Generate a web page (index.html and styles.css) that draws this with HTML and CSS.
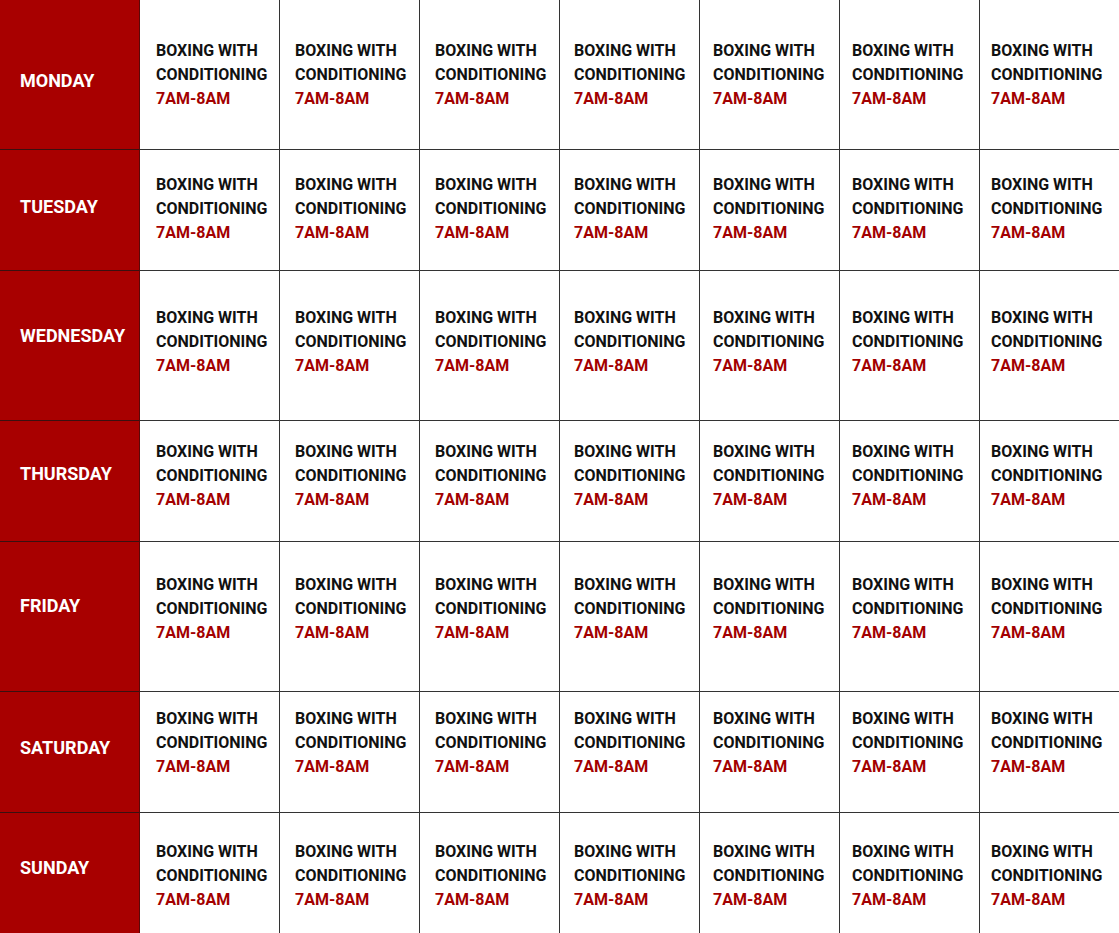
FILE: index.html
```html
<!DOCTYPE html>
<html lang="en">
<head>
<meta charset="utf-8">
<title>Class Schedule</title>
<link rel="stylesheet" href="styles.css">
</head>
<body>
<div class="schedule">
  <div class="row">
    <div class="day">MONDAY</div>
    <div class="cell"><div class="name">BOXING WITH CONDITIONING</div><div class="time">7AM-8AM</div></div>
    <div class="cell"><div class="name">BOXING WITH CONDITIONING</div><div class="time">7AM-8AM</div></div>
    <div class="cell"><div class="name">BOXING WITH CONDITIONING</div><div class="time">7AM-8AM</div></div>
    <div class="cell"><div class="name">BOXING WITH CONDITIONING</div><div class="time">7AM-8AM</div></div>
    <div class="cell"><div class="name">BOXING WITH CONDITIONING</div><div class="time">7AM-8AM</div></div>
    <div class="cell"><div class="name">BOXING WITH CONDITIONING</div><div class="time">7AM-8AM</div></div>
    <div class="cell"><div class="name">BOXING WITH CONDITIONING</div><div class="time">7AM-8AM</div></div>
  </div>
  <div class="row">
    <div class="day">TUESDAY</div>
    <div class="cell"><div class="name">BOXING WITH CONDITIONING</div><div class="time">7AM-8AM</div></div>
    <div class="cell"><div class="name">BOXING WITH CONDITIONING</div><div class="time">7AM-8AM</div></div>
    <div class="cell"><div class="name">BOXING WITH CONDITIONING</div><div class="time">7AM-8AM</div></div>
    <div class="cell"><div class="name">BOXING WITH CONDITIONING</div><div class="time">7AM-8AM</div></div>
    <div class="cell"><div class="name">BOXING WITH CONDITIONING</div><div class="time">7AM-8AM</div></div>
    <div class="cell"><div class="name">BOXING WITH CONDITIONING</div><div class="time">7AM-8AM</div></div>
    <div class="cell"><div class="name">BOXING WITH CONDITIONING</div><div class="time">7AM-8AM</div></div>
  </div>
  <div class="row">
    <div class="day">WEDNESDAY</div>
    <div class="cell"><div class="name">BOXING WITH CONDITIONING</div><div class="time">7AM-8AM</div></div>
    <div class="cell"><div class="name">BOXING WITH CONDITIONING</div><div class="time">7AM-8AM</div></div>
    <div class="cell"><div class="name">BOXING WITH CONDITIONING</div><div class="time">7AM-8AM</div></div>
    <div class="cell"><div class="name">BOXING WITH CONDITIONING</div><div class="time">7AM-8AM</div></div>
    <div class="cell"><div class="name">BOXING WITH CONDITIONING</div><div class="time">7AM-8AM</div></div>
    <div class="cell"><div class="name">BOXING WITH CONDITIONING</div><div class="time">7AM-8AM</div></div>
    <div class="cell"><div class="name">BOXING WITH CONDITIONING</div><div class="time">7AM-8AM</div></div>
  </div>
  <div class="row">
    <div class="day">THURSDAY</div>
    <div class="cell"><div class="name">BOXING WITH CONDITIONING</div><div class="time">7AM-8AM</div></div>
    <div class="cell"><div class="name">BOXING WITH CONDITIONING</div><div class="time">7AM-8AM</div></div>
    <div class="cell"><div class="name">BOXING WITH CONDITIONING</div><div class="time">7AM-8AM</div></div>
    <div class="cell"><div class="name">BOXING WITH CONDITIONING</div><div class="time">7AM-8AM</div></div>
    <div class="cell"><div class="name">BOXING WITH CONDITIONING</div><div class="time">7AM-8AM</div></div>
    <div class="cell"><div class="name">BOXING WITH CONDITIONING</div><div class="time">7AM-8AM</div></div>
    <div class="cell"><div class="name">BOXING WITH CONDITIONING</div><div class="time">7AM-8AM</div></div>
  </div>
  <div class="row">
    <div class="day">FRIDAY</div>
    <div class="cell"><div class="name">BOXING WITH CONDITIONING</div><div class="time">7AM-8AM</div></div>
    <div class="cell"><div class="name">BOXING WITH CONDITIONING</div><div class="time">7AM-8AM</div></div>
    <div class="cell"><div class="name">BOXING WITH CONDITIONING</div><div class="time">7AM-8AM</div></div>
    <div class="cell"><div class="name">BOXING WITH CONDITIONING</div><div class="time">7AM-8AM</div></div>
    <div class="cell"><div class="name">BOXING WITH CONDITIONING</div><div class="time">7AM-8AM</div></div>
    <div class="cell"><div class="name">BOXING WITH CONDITIONING</div><div class="time">7AM-8AM</div></div>
    <div class="cell"><div class="name">BOXING WITH CONDITIONING</div><div class="time">7AM-8AM</div></div>
  </div>
  <div class="row">
    <div class="day">SATURDAY</div>
    <div class="cell"><div class="name">BOXING WITH CONDITIONING</div><div class="time">7AM-8AM</div></div>
    <div class="cell"><div class="name">BOXING WITH CONDITIONING</div><div class="time">7AM-8AM</div></div>
    <div class="cell"><div class="name">BOXING WITH CONDITIONING</div><div class="time">7AM-8AM</div></div>
    <div class="cell"><div class="name">BOXING WITH CONDITIONING</div><div class="time">7AM-8AM</div></div>
    <div class="cell"><div class="name">BOXING WITH CONDITIONING</div><div class="time">7AM-8AM</div></div>
    <div class="cell"><div class="name">BOXING WITH CONDITIONING</div><div class="time">7AM-8AM</div></div>
    <div class="cell"><div class="name">BOXING WITH CONDITIONING</div><div class="time">7AM-8AM</div></div>
  </div>
  <div class="row">
    <div class="day">SUNDAY</div>
    <div class="cell"><div class="name">BOXING WITH CONDITIONING</div><div class="time">7AM-8AM</div></div>
    <div class="cell"><div class="name">BOXING WITH CONDITIONING</div><div class="time">7AM-8AM</div></div>
    <div class="cell"><div class="name">BOXING WITH CONDITIONING</div><div class="time">7AM-8AM</div></div>
    <div class="cell"><div class="name">BOXING WITH CONDITIONING</div><div class="time">7AM-8AM</div></div>
    <div class="cell"><div class="name">BOXING WITH CONDITIONING</div><div class="time">7AM-8AM</div></div>
    <div class="cell"><div class="name">BOXING WITH CONDITIONING</div><div class="time">7AM-8AM</div></div>
    <div class="cell"><div class="name">BOXING WITH CONDITIONING</div><div class="time">7AM-8AM</div></div>
  </div>
</div>
</body>
</html>
```
FILE: styles.css
```css
html, body {
  margin: 0;
  padding: 0;
  background: #ffffff;
  overflow: hidden;
}

.schedule {
  width: 1120px;
  font-family: Roboto, "Liberation Sans", Arial, sans-serif;
  font-weight: 700;
}

.row {
  display: grid;
  grid-template-columns: repeat(8, 140px);
  height: 150px;
}

.row:nth-child(2),
.row:nth-child(4),
.row:nth-child(6) {
  height: 121px;
}

.day,
.cell {
  box-sizing: border-box;
  border-right: 1px solid #333333;
  border-bottom: 1px solid #333333;
}

.day {
  background: #a80000;
  color: #ffffff;
  font-size: 18px;
  line-height: 24px;
  padding-left: 20px;
  border-bottom-color: #3a1010;
  border-right-color: #5a0808;
}

.cell {
  color: #111111;
  font-size: 16px;
  line-height: 24px;
}

.name {
  max-width: 118px;
}

.time {
  color: #a30000;
}

/* horizontal text offsets per column */
.cell:nth-child(2) { padding-left: 16px; }
.cell:nth-child(3) { padding-left: 15px; }
.cell:nth-child(4) { padding-left: 15px; }
.cell:nth-child(5) { padding-left: 14px; }
.cell:nth-child(6) { padding-left: 13px; }
.cell:nth-child(7) { padding-left: 12px; }
.cell:nth-child(8) { padding-left: 11px; }

/* vertical text offsets per row */
.row:nth-child(1) .cell { padding-top: 39px; }
.row:nth-child(2) .cell { padding-top: 23px; }
.row:nth-child(3) .cell { padding-top: 35px; }
.row:nth-child(4) .cell { padding-top: 19px; }
.row:nth-child(5) .cell { padding-top: 31px; }
.row:nth-child(6) .cell { padding-top: 15px; }
.row:nth-child(7) .cell { padding-top: 27px; }

.row:nth-child(1) .day { padding-top: 69px; }
.row:nth-child(2) .day { padding-top: 45px; }
.row:nth-child(3) .day { padding-top: 53px; }
.row:nth-child(4) .day { padding-top: 41px; }
.row:nth-child(5) .day { padding-top: 52px; }
.row:nth-child(6) .day { padding-top: 44px; }
.row:nth-child(7) .day { padding-top: 43px; }
```
